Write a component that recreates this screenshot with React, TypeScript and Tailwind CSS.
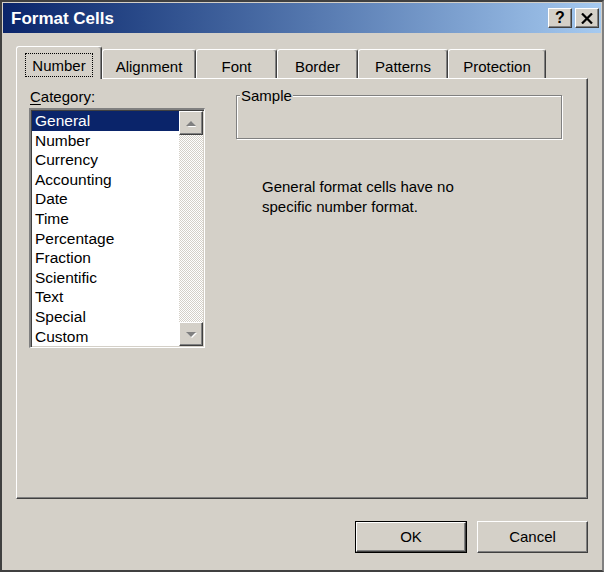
import React from 'react';

const CATEGORIES = [
  'General',
  'Number',
  'Currency',
  'Accounting',
  'Date',
  'Time',
  'Percentage',
  'Fraction',
  'Scientific',
  'Text',
  'Special',
  'Custom',
];

interface TabDef {
  label: string;
  width: string;
}

const TABS: TabDef[] = [
  { label: 'Number', width: 'w-[86px]' },
  { label: 'Alignment', width: 'w-[94px]' },
  { label: 'Font', width: 'w-[81px]' },
  { label: 'Border', width: 'w-[81px]' },
  { label: 'Patterns', width: 'w-[90px]' },
  { label: 'Protection', width: 'w-[98px]' },
];

// raised 3d edge used by tabs, buttons and scroll arrows
const RAISED =
  'border-t border-l border-t-white border-l-white border-r border-b border-r-[#404040] border-b-[#404040] shadow-[inset_-1px_-1px_0_#808080]';

function TitleButton({ children }: { children: React.ReactNode }) {
  return (
    <div className={`w-[24px] h-[20px] bg-[#d4d0c8] flex items-center justify-center ${RAISED}`}>
      {children}
    </div>
  );
}

function Arrow({ up }: { up: boolean }) {
  return (
    <div className={`w-[24px] h-[24px] bg-[#d4d0c8] flex items-center justify-center ${RAISED}`}>
      <svg width="12" height="7" viewBox="0 0 12 7">
        {up ? (
          <>
            <polygon points="1,7 11,7 6,1" fill="#ffffff" transform="translate(1,1)" />
            <polygon points="1,6 11,6 6,1" fill="#808080" />
          </>
        ) : (
          <>
            <polygon points="1,1 11,1 6,6" fill="#ffffff" transform="translate(1,1)" />
            <polygon points="1,1 11,1 6,6" fill="#808080" />
          </>
        )}
      </svg>
    </div>
  );
}

function PushButton({ label, isDefault }: { label: string; isDefault?: boolean }) {
  return (
    <div
      className={`h-[32px] ${isDefault ? 'w-[112px] border border-black' : 'w-[111px]'} bg-[#d4d0c8]`}
    >
      <div className={`h-full w-full flex items-center justify-center text-[15px] text-black ${RAISED}`}>
        {label}
      </div>
    </div>
  );
}

export default function App() {
  return (
    <div className="w-[604px] h-[572px] bg-[#d4d0c8] border-2 border-[#404040] border-r-[#808080] border-b-[#404040] p-px flex flex-col font-['Liberation_Sans',Arial,sans-serif] text-black select-none">
      {/* title bar */}
      <div className="h-[30px] shrink-0 bg-linear-to-r from-[#0a246a] to-[#a6caf0] flex items-center justify-between pl-[8px] pr-[2px]">
        <span className="text-white font-bold text-[17px] leading-none">Format Cells</span>
        <div className="flex gap-[3px]">
          <TitleButton>
            <span className="font-bold text-[16px] leading-none text-black">?</span>
          </TitleButton>
          <TitleButton>
            <svg width="12" height="11" viewBox="0 0 12 11">
              <path d="M1 0.5 L11 10.5 M11 0.5 L1 10.5" stroke="#000" strokeWidth="2.2" />
            </svg>
          </TitleButton>
        </div>
      </div>

      {/* body */}
      <div className="flex-1 flex flex-col pl-[13px] pr-[12px] pt-[13px]">
        {/* tabs */}
        <div className="flex items-end h-[33px] relative z-10 -mb-px">
          {TABS.map((t, i) =>
            i === 0 ? (
              <div
                key={t.label}
                className={`${t.width} h-[33px] bg-[#d4d0c8] rounded-t-[3px] border-t border-l border-white border-r border-r-[#404040] shadow-[inset_-1px_0_0_#808080] flex justify-center pt-[6px]`}
              >
                <span className="h-[24px] px-[6px] border border-dotted border-black text-[15px] leading-[23px]">
                  {t.label}
                </span>
              </div>
            ) : (
              <div
                key={t.label}
                className={`${t.width} h-[29px] mb-px rounded-t-[3px] border-t border-l border-white border-r border-r-[#404040] shadow-[inset_-1px_0_0_#808080] flex items-center justify-center pt-[6px] text-[15px]`}
              >
                {t.label}
              </div>
            ),
          )}
        </div>

        {/* panel */}
        <div className="h-[421px] w-[572px] border-t border-l border-white border-r border-b border-r-[#404040] border-b-[#404040] shadow-[inset_-1px_-1px_0_#808080] flex">
          {/* category column */}
          <div className="ml-[12px] mt-[9px] flex flex-col">
            <div className="text-[15px] leading-[18px] pl-[1px]">
              <span className="underline underline-offset-2">C</span>ategory:
            </div>
            <div className="mt-[2px] w-[176px] h-[240px] border-t-2 border-l-2 border-t-[#808080] border-l-[#808080] border-r border-b border-r-white border-b-white shadow-[inset_1px_1px_0_#404040,inset_-1px_-1px_0_#d4d0c8] bg-white flex p-px pl-[1px]">
              <div className="flex-1 flex flex-col">
                {CATEGORIES.map((c, i) => (
                  <div
                    key={c}
                    className={`h-[19.6px] leading-[19.6px] pl-[3px] text-[15.5px] ${
                      i === 0 ? 'bg-[#0a246a] text-white' : 'text-black'
                    }`}
                  >
                    {c}
                  </div>
                ))}
              </div>
              <div className="w-[24px] flex flex-col bg-[repeating-conic-gradient(#ffffff_0_25%,#d4d0c8_0_50%)] bg-[length:2px_2px]">
                <Arrow up />
                <div className="flex-1" />
                <Arrow up={false} />
              </div>
            </div>
          </div>

          {/* sample & description */}
          <div className="ml-[31px] mt-[16px] flex flex-col">
            <div className="relative w-[326px] h-[44px] border border-[#808080] shadow-[inset_1px_1px_0_#ffffff,1px_1px_0_#ffffff]">
              <span className="absolute left-[3px] -top-[9px] px-px bg-[#d4d0c8] text-[15px] leading-[18px]">
                Sample
              </span>
            </div>
            <div className="mt-[38px] ml-[26px] text-[15px] leading-[20px]">
              General format cells have no
              <br />
              specific number format.
            </div>
          </div>
        </div>

        {/* buttons */}
        <div className="mt-[22px] flex justify-end gap-[10px] pr-[1px]">
          <PushButton label="OK" isDefault />
          <PushButton label="Cancel" />
        </div>
      </div>
    </div>
  );
}
